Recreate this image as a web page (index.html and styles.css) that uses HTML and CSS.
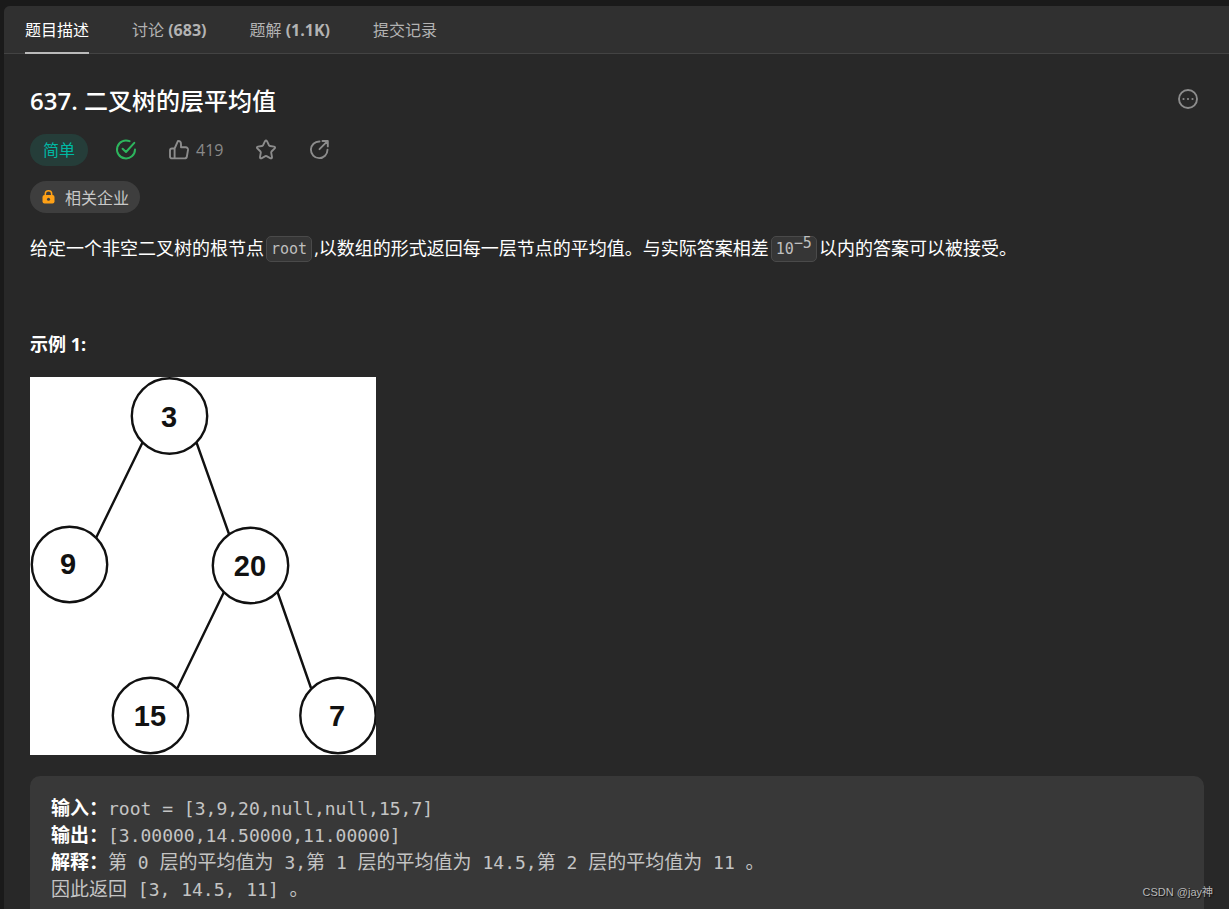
FILE: index.html
```html
<!DOCTYPE html>
<html lang="zh-CN">
<head>
<meta charset="utf-8">
<title>637. 二叉树的层平均值</title>
<link rel="stylesheet" href="styles.css">
</head>
<body>
<main class="panel">
  <nav class="tabs">
    <a class="tab tab-active" href="#description">题目描述</a>
    <a class="tab" href="#discussion">讨论 <span class="count">(683)</span></a>
    <a class="tab" href="#solutions">题解 <span class="count">(1.1K)</span></a>
    <a class="tab" href="#submissions">提交记录</a>
  </nav>
  <article class="content" id="description">
    <header class="title-row">
      <h1 class="title"><span class="number">637.</span> 二叉树的层平均值</h1>
      <button class="icon-button" type="button" aria-label="更多">
        <svg class="icon" viewBox="0 0 20 20"><circle cx="10" cy="10" r="9"/><g class="dots"><circle cx="5.5" cy="10" r="1.1"/><circle cx="10" cy="10" r="1.1"/><circle cx="14.5" cy="10" r="1.1"/></g></svg>
      </button>
    </header>
    <div class="meta">
      <span class="difficulty">简单</span>
      <div class="actions">
        <svg class="icon icon-solved" viewBox="0 0 20 20" role="img" aria-label="已解答"><path d="M13.6 1.2A9 9 0 1 0 19 9.500M6.600 8.700l3.400 3.300 8.300-9.200"/></svg>
        <button class="icon-button" type="button">
          <svg class="icon" viewBox="0 0 20 20"><path d="M5.6 8.500 9 .9c1.900 0 3 1.200 3 3v3.400h4.700c1.500 0 2.500 1.100 2.300 2.600l-1.100 6.600c-.2 1.200-1 1.900-2.200 1.900H3c-1.300 0-2-.8-2-2v-5.900c0-1.300.8-2 2-2h2.600v9.900"/></svg>
          <span>419</span>
        </button>
        <button class="icon-button" type="button" aria-label="收藏">
          <svg class="icon" viewBox="0 0 20 20"><path d="M9 1.200q1-1.500 2 0l2 4.100q.3.600 1 .7l4.100.6q1.600.4.600 1.700l-3.200 3.200q-.4.500-.3 1.100l.8 4.500q.1 1.600-1.400 1.200l-4-2.100q-.6-.3-1.200 0l-4 2.100q-1.500.4-1.400-1.200l.8-4.500q.1-.6-.3-1.100L1.300 8.300Q.3 7 1.900 6.600L6 6q.7-.1 1-.7z"/></svg>
        </button>
        <button class="icon-button" type="button" aria-label="分享">
          <svg class="icon" viewBox="0 0 20 20"><path d="M10.500 1.500A8.300 8.300 0 1 0 18.500 9.800M10.500 9.200 18 1.700M13.500 1h5.300v5.400"/></svg>
        </button>
      </div>
    </div>
    <button class="company" type="button">
      <svg class="lock" viewBox="0 0 13 14"><path d="M3.300 6V4a3.200 3.200 0 0 1 6.400 0v2" fill="none" stroke="#ffa116" stroke-width="1.500"/><rect x=".5" y="5" width="12" height="8.500" rx="2" fill="#ffa116"/><circle cx="6.500" cy="9.200" r="1.500" fill="#3e3e3e"/></svg>
      <span>相关企业</span>
    </button>
    <p class="statement">给定一个非空二叉树的根节点<code class="code">root</code>,以数组的形式返回每一层节点的平均值。与实际答案相差<code class="code">10<sup>−5</sup></code>以内的答案可以被接受。</p>
    <h2 class="example-title">示例 1:</h2>
    <svg class="tree" viewBox="0 0 346 378" role="img" aria-label="二叉树">
      <rect width="346" height="378" fill="#fff"/>
      <path class="edge" d="M112.500 65.500 66 161M166.500 65.500 199 157M194 215 147.500 311M247.500 215 281 311"/>
      <g class="node"><circle cx="139.500" cy="39" r="37.700"/><circle cx="39.500" cy="187.500" r="37.700"/><circle cx="220.500" cy="188.500" r="37.700"/><circle cx="120.500" cy="338.500" r="37.700"/><circle cx="308" cy="338.500" r="37.700"/></g>
      <g class="node-text"><text x="139" y="50">3</text><text x="38" y="197">9</text><text x="220" y="199">20</text><text x="120" y="349">15</text><text x="307" y="349">7</text></g>
    </svg>
    <pre class="sample"><strong class="label">输入：</strong>root = [3,9,20,null,null,15,7]
<strong class="label">输出：</strong>[3.00000,14.50000,11.00000]
<strong class="label">解释：</strong><span class="han">第</span> 0 <span class="han">层的平均值为</span> 3,<span class="han">第</span> 1 <span class="han">层的平均值为</span> 14.5,<span class="han">第</span> 2 <span class="han">层的平均值为</span> 11 <span class="han">。</span>
<span class="han">因此返回</span> [3, 14.5, 11] <span class="han">。</span></pre>
  </article>
</main>
<div class="watermark">CSDN @jay神</div>
</body>
</html>
```
FILE: styles.css
```css
* { box-sizing: border-box; }
body {
  margin: 0;
  height: 100vh;
  overflow: hidden;
  padding: 6px 0 0 4px;
  background: #1a1a1a;
  color: #fff;
  font-family: "Open Sans", "Noto Sans CJK SC", sans-serif;
  font-size: 16px;
}
.panel {
  min-height: 100%;
  background: #282828;
  border-top-left-radius: 6px;
  overflow: hidden;
}
.tabs {
  display: flex;
  gap: 43px;
  height: 48px;
  padding-left: 21px;
  background: #303030;
  border-bottom: 1px solid #434343;
}
.tab {
  height: 48px;
  line-height: 48px;
  color: #b3b3b3;
  text-decoration: none;
  white-space: nowrap;
}
.tab-active { color: #fff; border-bottom: 2px solid #bababa; }
.count { font-weight: 700; }
.content { padding: 31px 25px 24px 26px; }
.title-row {
  display: flex;
  justify-content: space-between;
  align-items: flex-start;
  padding-right: 6px;
}
.title { margin: 0; font-size: 24px; line-height: 32px; font-weight: 500; }
.number { font-weight: 600; }
.title-row .icon-button { margin-top: 4px; }
.meta { display: flex; align-items: center; gap: 27px; margin-top: 17px; }
.difficulty {
  height: 32px;
  padding: 0 13px;
  line-height: 32px;
  border-radius: 16px;
  background: #253d39;
  color: #00b8a3;
}
.actions { display: flex; align-items: center; gap: 33px; padding-left: 1px; }
.icon-button {
  display: flex;
  align-items: center;
  gap: 7px;
  padding: 0;
  border: 0;
  background: none;
  color: #8a8a8a;
  font: inherit;
  line-height: 20px;
}
.icon {
  display: block;
  width: 20px;
  height: 20px;
  overflow: visible;
  fill: none;
  stroke: #8c8c8c;
  stroke-width: 1.9;
  stroke-linecap: round;
  stroke-linejoin: round;
}
.icon .dots { fill: #8c8c8c; stroke: none; }
.icon-solved { stroke: #2db55d; stroke-width: 2; }
.company {
  display: flex;
  align-items: center;
  gap: 10px;
  height: 32px;
  margin-top: 15px;
  padding: 0 11px 0 12px;
  border: 0;
  border-radius: 16px;
  background: #3e3e3e;
  color: #c8c8c8;
  font: inherit;
}
.lock { width: 13px; height: 14px; }
.statement { margin: 21px 0 0; font-size: 18px; line-height: 28px; }
.code {
  display: inline-block;
  height: 26px;
  margin: 0 2px;
  padding: 0 4px;
  border: 1px solid #4a4a4a;
  border-radius: 5px;
  background: #363636;
  color: #bfbfbf;
  font-family: "DejaVu Sans Mono", monospace;
  font-size: 15px;
  line-height: 24px;
  vertical-align: 1px;
}
.code sup { font-size: 15px; line-height: 0; vertical-align: 6px; }
.example-title { margin: 68px 0 0; font-size: 18px; line-height: 28px; font-weight: 700; }
.tree { display: block; width: 346px; height: 378px; margin-top: 19px; }
.edge { fill: none; stroke: #111; stroke-width: 2.4; }
.node { fill: #fff; stroke: #111; stroke-width: 2.4; }
.node-text {
  fill: #111;
  font: bold 29px "Liberation Sans", sans-serif;
  text-anchor: middle;
}
.sample {
  margin: 21px 0 0;
  padding: 19px 21px;
  border-radius: 10px;
  background: #383838;
  color: #c4c4c4;
  font-family: "DejaVu Sans Mono", "Noto Sans CJK SC", monospace;
  font-size: 18px;
  line-height: 27px;
}
.han, .label { font-family: "Noto Sans CJK SC", sans-serif; font-size: 19px; line-height: 1; }
.label { color: #fff; }
.watermark {
  position: absolute;
  right: 16px;
  bottom: 9px;
  color: #b8b8b8;
  font: 11px/16px "Liberation Sans", "Noto Sans CJK SC", sans-serif;
  text-shadow: 1px 1px 1px #111;
}
```
